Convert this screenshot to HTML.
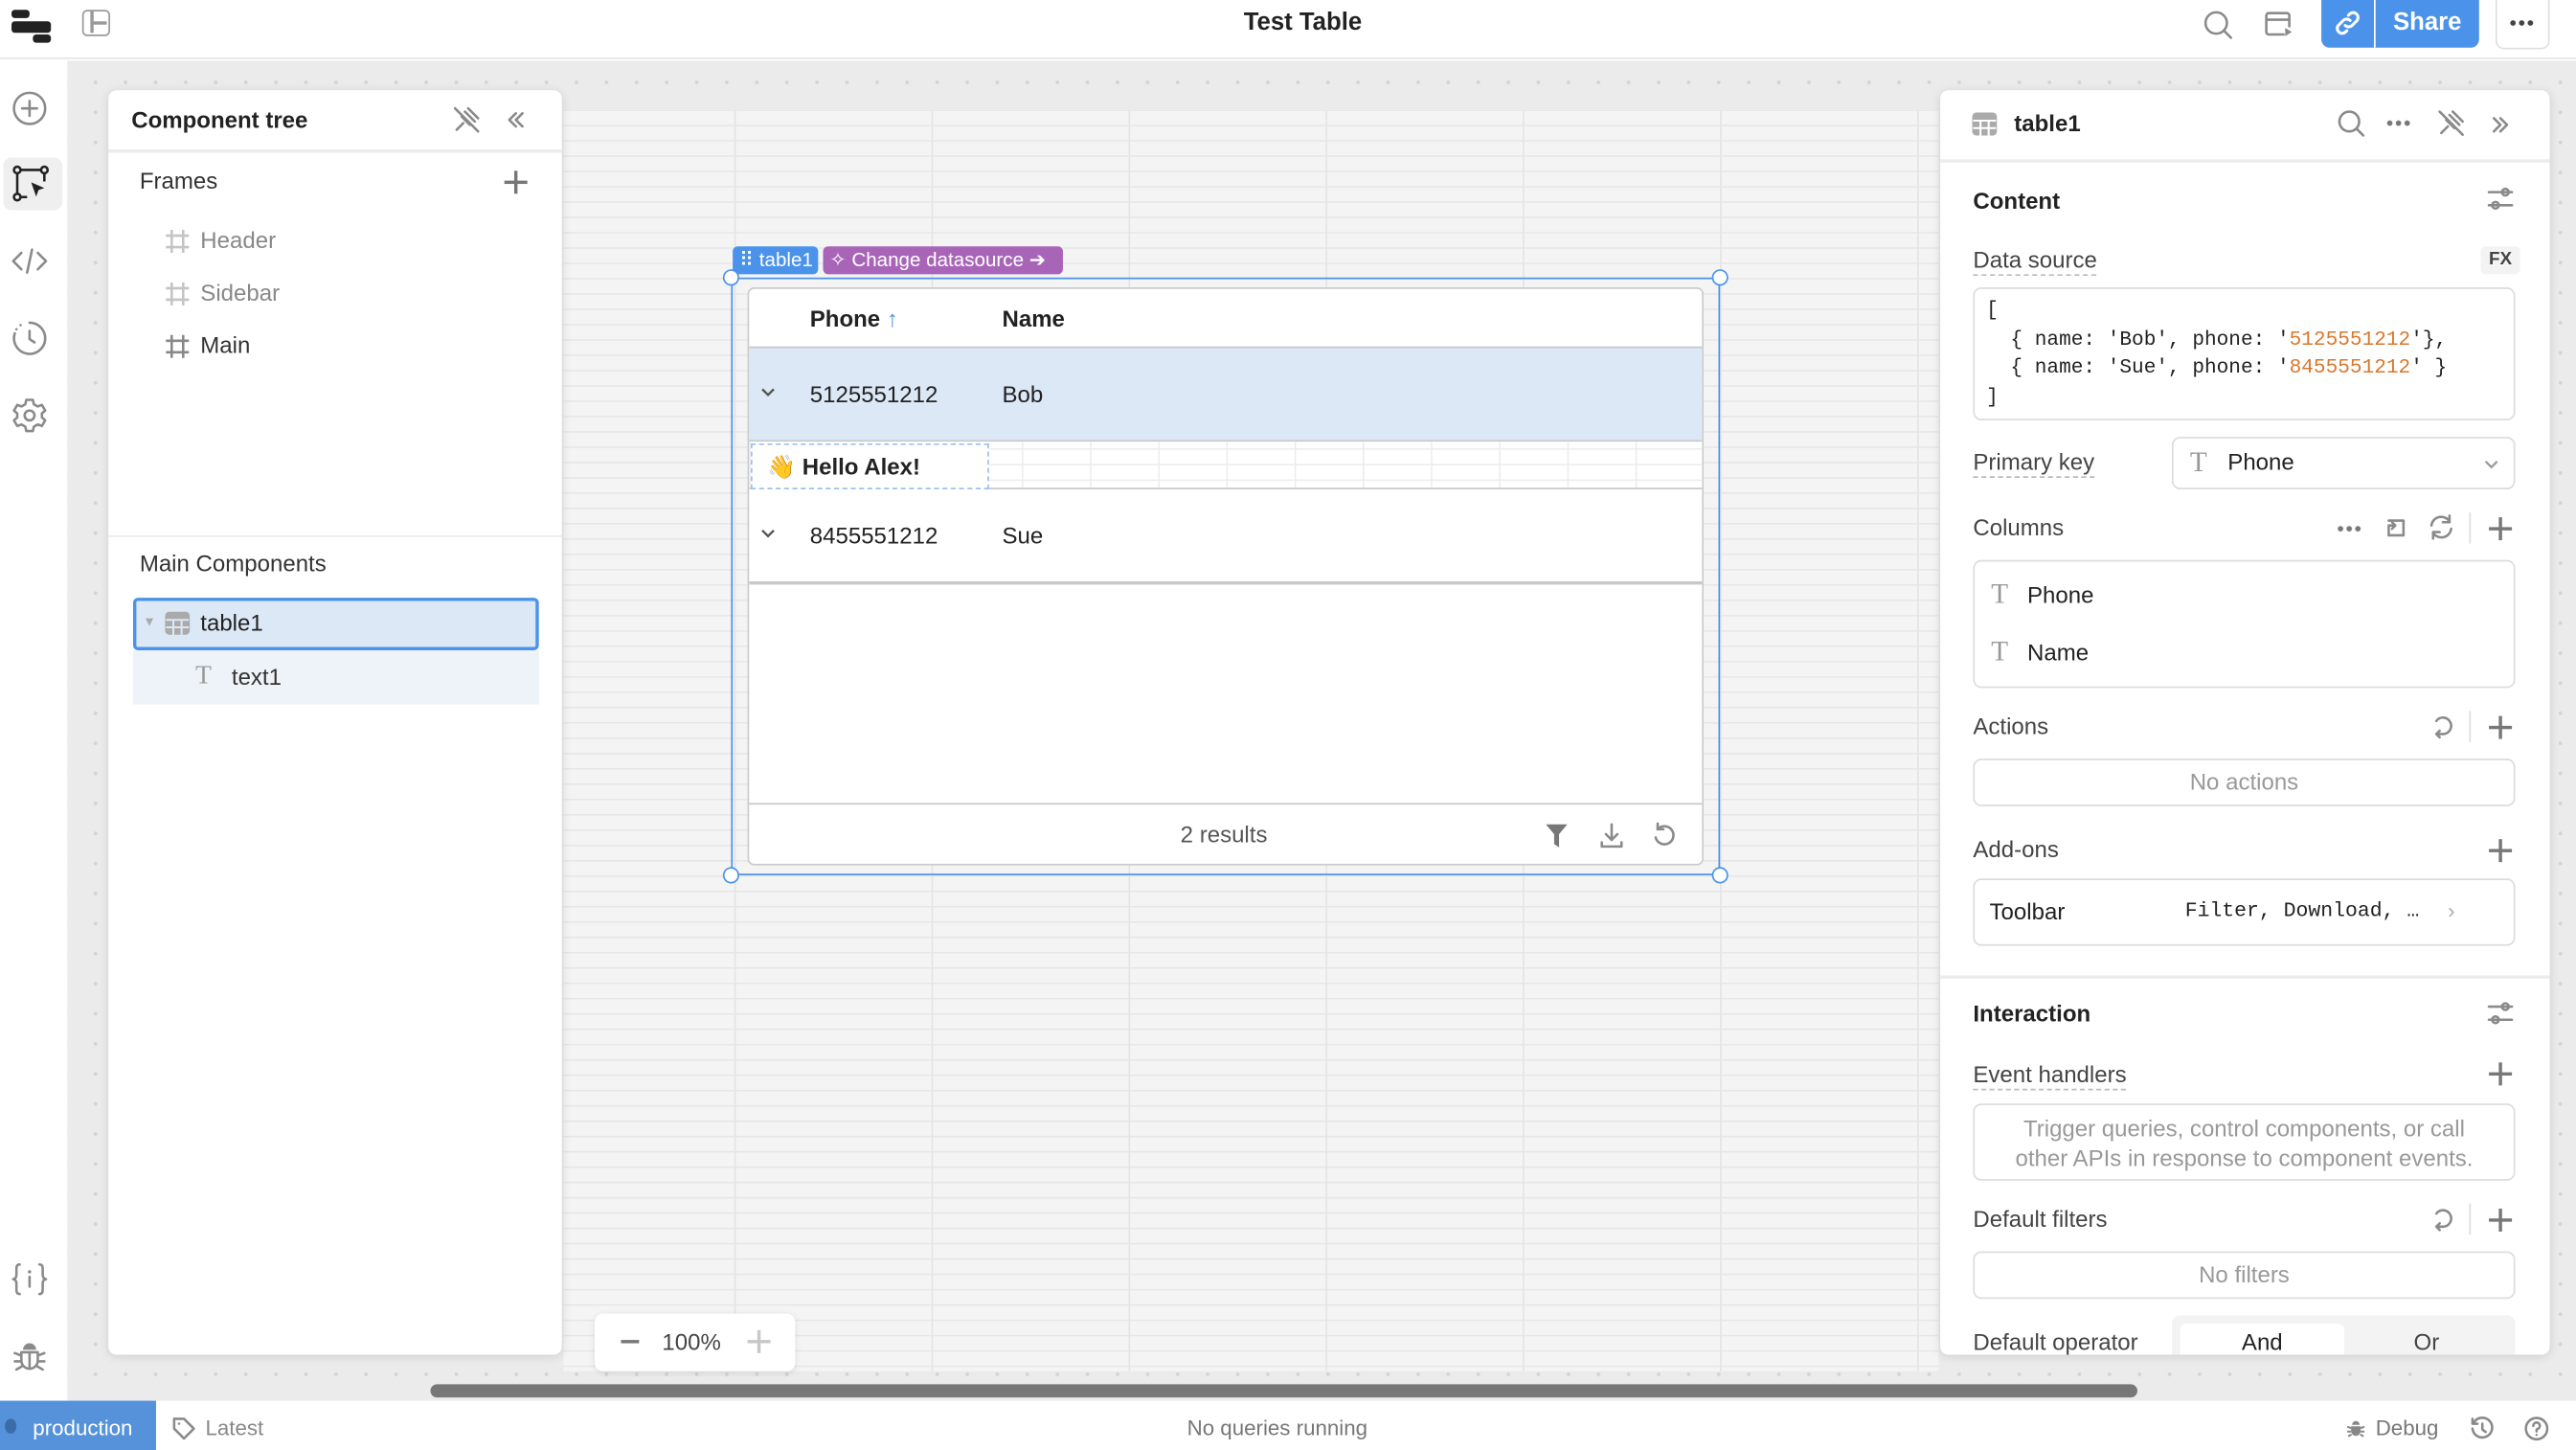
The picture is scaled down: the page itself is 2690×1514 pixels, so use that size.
<!DOCTYPE html>
<html><head><meta charset="utf-8">
<style>
*{box-sizing:border-box;margin:0;padding:0}
html,body{width:2690px;height:1514px;overflow:hidden;background:#fff}
#w{position:absolute;left:0;top:0;width:1568px;height:883px;transform:scale(1.71556,1.7146);transform-origin:0 0;font-family:"Liberation Sans",sans-serif;color:#222;font-size:14px}
.a{position:absolute}
svg{display:block}
.ic{stroke:#8a8a8a;fill:none;stroke-width:1.5;stroke-linecap:round;stroke-linejoin:round}
.lbl{color:#444;font-size:14px}
.dash{border-bottom:1px dashed #bbb;padding-bottom:1px}
.box{border:1px solid #dcdcdc;border-radius:5px;background:#fff}
.plus{position:absolute;width:14px;height:14px}
.plus:before,.plus:after{content:"";position:absolute;background:#777}
.plus:before{left:6px;top:0;width:1.5px;height:14px}
.plus:after{top:6px;left:0;height:1.5px;width:14px}
.dots{position:absolute;width:16px;height:4px;background:radial-gradient(circle,#777 1.5px,transparent 1.8px);background-size:5.3px 4px}
</style></head><body><div id="w">

<!-- top bar -->
<div class="a" style="left:0;top:0;width:1568px;height:36px;background:#fff;border-bottom:1px solid #e6e6e6"></div>
<div class="a" style="left:7px;top:6px;width:11px;height:5px;background:#222;border-radius:2px"></div>
<div class="a" style="left:7px;top:12.5px;width:24px;height:7px;background:#222;border-radius:2px"></div>
<div class="a" style="left:20px;top:21px;width:11px;height:5px;background:#222;border-radius:2px"></div>
<div class="a" style="left:50px;top:6px;width:17px;height:16px;border:1.5px solid #999;border-radius:3px"><div class="a" style="left:4px;top:0;width:1.5px;height:13px;background:#999"></div><div class="a" style="left:5px;top:6px;width:9px;height:1.5px;background:#999"></div></div>
<div class="a" style="left:0;top:5px;width:1586px;text-align:center;font-weight:bold;font-size:15px;color:#222">Test Table</div>
<svg class="a" style="left:1340px;top:5px" width="20" height="20" viewBox="0 0 20 20"><circle cx="9" cy="9" r="6.5" class="ic" stroke-width="1.6"/><path d="M14 14l4 4" class="ic" stroke-width="1.6"/></svg>
<svg class="a" style="left:1377px;top:5px" width="20" height="20" viewBox="0 0 20 20"><path d="M13 16H4a1.5 1.5 0 0 1-1.5-1.5v-10A1.5 1.5 0 0 1 4 3h11a1.5 1.5 0 0 1 1.5 1.5V11M2.5 7h14" class="ic" stroke-width="1.6"/><path d="M14 12l4 2.5-4 2.5z" fill="#8a8a8a"/></svg>
<div class="a" style="left:1413px;top:0;width:96px;height:29px;background:#4b93ea;border-radius:0 0 5px 5px"></div>
<div class="a" style="left:1445px;top:0;width:1px;height:29px;background:#fff"></div>
<svg class="a" style="left:1419px;top:4px" width="20" height="20" viewBox="0 0 20 20"><path d="M8.5 11.5a3 3 0 0 0 4.2 0l3-3a3 3 0 0 0-4.2-4.2l-1 1M11.5 8.5a3 3 0 0 0-4.2 0l-3 3a3 3 0 0 0 4.2 4.2l1-1" stroke="#fff" fill="none" stroke-width="1.8" stroke-linecap="round"/></svg>
<div class="a" style="left:1446px;top:5px;width:63px;text-align:center;color:#fff;font-weight:bold;font-size:15px">Share</div>
<div class="a" style="left:1519px;top:0;width:33px;height:30px;border:1px solid #e0e0e0;border-top:none;border-radius:0 0 5px 5px"></div>
<div class="dots" style="left:1527px;top:12px;background-image:radial-gradient(circle,#444 1.5px,transparent 1.8px)"></div>

<!-- left rail -->
<div class="a" style="left:0;top:37px;width:41px;height:816px;background:#fff"></div>
<svg class="a" style="left:6px;top:54px" width="24" height="24" viewBox="0 0 24 24"><circle cx="12" cy="12" r="9.5" class="ic"/><path d="M12 7.5v9M7.5 12h9" class="ic"/></svg>
<div class="a" style="left:2px;top:96px;width:36px;height:32px;background:#efefef;border-radius:5px"></div>
<svg class="a" style="left:7px;top:100px" width="24" height="24" viewBox="0 0 24 24"><circle cx="3.5" cy="3.5" r="2" stroke="#222" fill="none" stroke-width="1.5"/><circle cx="20" cy="3.5" r="2" stroke="#222" fill="none" stroke-width="1.5"/><circle cx="3.5" cy="20" r="2" stroke="#222" fill="none" stroke-width="1.5"/><path d="M5.5 3.5h12.5M3.5 5.5v12.5M20 5.5v5M5.5 20h4" stroke="#222" stroke-width="1.5"/><path d="M12 11l8 3.5-3.5 1.2-1.5 4z" fill="#222"/></svg>
<svg class="a" style="left:6px;top:147px" width="24" height="24" viewBox="0 0 24 24"><path d="M7 7l-5 5 5 5M17 7l5 5-5 5M13.5 5l-3 14" class="ic"/></svg>
<svg class="a" style="left:6px;top:194px" width="24" height="24" viewBox="0 0 24 24"><path d="M12 2.5A9.5 9.5 0 1 1 3 9" class="ic"/><path d="M4 6.5l.01 0M6.5 4l.01 0M12 7.5v5l3 2" class="ic" stroke-width="1.8"/></svg>
<svg class="a" style="left:6px;top:241px" width="24" height="24" viewBox="0 0 24 24"><circle cx="12" cy="12" r="3" class="ic"/><path d="M10 2.5h4l.6 2.7 2.3 1.3 2.6-.9 2 3.4-2 1.8v2.4l2 1.8-2 3.4-2.6-.9-2.3 1.3-.6 2.7h-4l-.6-2.7-2.3-1.3-2.6.9-2-3.4 2-1.8v-2.4l-2-1.8 2-3.4 2.6.9 2.3-1.3z" class="ic"/></svg>
<svg class="a" style="left:6px;top:767px" width="24" height="24" viewBox="0 0 24 24"><path d="M6 3C4 3 4 4.5 4 6.5v3C4 11 3 12 2 12c1 0 2 1 2 2.5v3C4 19.5 4 21 6 21M18 3c2 0 2 1.5 2 3.5v3c0 1.5 1 2.5 2 2.5-1 0-2 1-2 2.5v3c0 2 0 3.5-2 3.5M12 10.5v6" class="ic"/><circle cx="12" cy="7.5" r="1" fill="#8a8a8a"/></svg>
<svg class="a" style="left:6px;top:814px" width="24" height="24" viewBox="0 0 24 24"><path d="M8 8a4 4 0 0 1 8 0z" fill="#8a8a8a"/><path d="M7 9.5h10v5a5 5 0 0 1-10 0zM12 9.5v10M3 10l4 1.5M21 10l-4 1.5M3 15h4M21 15h-4M4 20l3.5-2M20 20l-3.5-2" class="ic"/></svg>

<!-- canvas -->
<div class="a" style="left:41px;top:37px;width:1527px;height:816px;background:#ebebeb;background-image:radial-gradient(circle,#d4d4d4 1px,transparent 1.3px);background-size:18.3px 18.3px;background-position:8px 4px"></div>
<div class="a" style="left:343px;top:67px;width:837px;height:768px;background-color:#f4f4f4;background-image:linear-gradient(to bottom,#e6e6e6 1px,transparent 1px),linear-gradient(to right,#e3e3e3 1px,transparent 1px);background-size:100% 9.33px,120px 100%;background-position:0 9px,104px 0"></div>

<!-- table selection -->
<div class="a" style="left:446px;top:150px;width:52px;height:17px;background:#4b93ea;border-radius:3px;color:#fff;font-size:12px;line-height:17px;padding-left:4px">⠿ table1</div>
<div class="a" style="left:501px;top:150px;width:146px;height:17px;background:#a865b8;border-radius:3px;color:#fff;font-size:12px;line-height:17px;padding-left:4px">✧ Change datasource ➔</div>
<div class="a" style="left:445px;top:169px;width:602px;height:364px;border:1.5px solid #4b93ea"></div>
<div class="a" style="left:440px;top:164px;width:10px;height:10px;border:1.5px solid #4b93ea;border-radius:50%;background:#fff"></div>
<div class="a" style="left:1042px;top:164px;width:10px;height:10px;border:1.5px solid #4b93ea;border-radius:50%;background:#fff"></div>
<div class="a" style="left:440px;top:528px;width:10px;height:10px;border:1.5px solid #4b93ea;border-radius:50%;background:#fff"></div>
<div class="a" style="left:1042px;top:528px;width:10px;height:10px;border:1.5px solid #4b93ea;border-radius:50%;background:#fff"></div>

<div class="a" style="left:455px;top:175px;width:582px;height:352px;background:#fff;border:1px solid #ccc;border-radius:4px;overflow:hidden">
  <div class="a" style="left:37px;top:10px;font-weight:bold;font-size:14px">Phone <span style="color:#4b93ea">↑</span></div>
  <div class="a" style="left:154px;top:10px;font-weight:bold;font-size:14px">Name</div>
  <div class="a" style="left:0;top:35px;width:582px;height:58px;background:#dce8f5;border-top:1px solid #c8c8c8;border-bottom:1px solid #c8c8c8"></div>
  <svg class="a" style="left:7px;top:60px" width="9" height="6" viewBox="0 0 9 6"><path d="M1 1l3.5 3.5L8 1" stroke="#555" fill="none" stroke-width="1.4"/></svg>
  <div class="a" style="left:37px;top:56px;font-size:14px">5125551212</div>
  <div class="a" style="left:154px;top:56px;font-size:14px">Bob</div>
  <div class="a" style="left:0;top:93px;width:582px;height:29px;background-color:#fff;background-image:linear-gradient(to right,#ececec 1px,transparent 1px),linear-gradient(to bottom,#ececec 1px,transparent 1px);background-size:41.5px 100%,100% 9.5px;background-position:0 0,0 4px;border-bottom:1px solid #c8c8c8"></div>
  <div class="a" style="left:1px;top:94px;width:145px;height:28px;border:1px dashed #9cc2ee;background:#fff;font-weight:bold;font-size:14px;line-height:26px;padding-left:9px">👋 Hello Alex!</div>
  <svg class="a" style="left:7px;top:146px" width="9" height="6" viewBox="0 0 9 6"><path d="M1 1l3.5 3.5L8 1" stroke="#555" fill="none" stroke-width="1.4"/></svg>
  <div class="a" style="left:37px;top:142px;font-size:14px">8455551212</div>
  <div class="a" style="left:154px;top:142px;font-size:14px">Sue</div>
  <div class="a" style="left:0;top:178px;width:582px;height:2px;background:#c8c8c8"></div>
  <div class="a" style="left:0;top:313px;width:582px;height:1px;background:#c8c8c8"></div>
  <div class="a" style="left:-2px;top:324px;width:582px;text-align:center;font-size:14px;color:#555">2 results</div>
  <svg class="a" style="left:483px;top:324px" width="18" height="18" viewBox="0 0 18 18"><path d="M2 2h13l-5 6v8l-3-2V8z" fill="#777"/></svg>
  <svg class="a" style="left:516px;top:324px" width="18" height="18" viewBox="0 0 18 18"><path d="M9 2v9M5.5 8L9 11.5 12.5 8M3 13v2.5h12V13" class="ic" stroke="#777"/></svg>
  <svg class="a" style="left:548px;top:324px" width="18" height="18" viewBox="0 0 18 18"><path d="M5 5a5.5 5.5 0 1 1-1.2 5" class="ic" stroke="#777"/><path d="M5 1.5V5h3.5" class="ic" stroke="#777"/></svg>
</div>

<!-- component tree panel -->
<div class="a" style="left:66px;top:55px;width:276px;height:770px;background:#fff;border-radius:5px;box-shadow:0 1px 6px rgba(0,0,0,.12)"></div>
<div class="a" style="left:66px;top:91px;width:276px;height:1.5px;background:#ececec"></div>
<div class="a" style="left:80px;top:65px;font-weight:bold;font-size:14px">Component tree</div>
<svg class="a" style="left:275px;top:64px" width="18" height="18" viewBox="0 0 18 18"><path d="M3 15l4-4M6 7l5 5M8 4l6 6M10 2l6 6M2 2l14 14" class="ic"/></svg>
<svg class="a" style="left:308px;top:67px" width="12" height="12" viewBox="0 0 12 12"><path d="M6 2L2 6l4 4M10 2L6 6l4 4" class="ic" stroke="#777"/></svg>
<div class="a" style="left:85px;top:102px;font-size:14px;color:#333">Frames</div>
<div class="plus" style="left:307px;top:104px"></div>
<svg class="a" style="left:100px;top:139px" width="16" height="16" viewBox="0 0 16 16"><path d="M4.5 1v14M11.5 1v14M1 4.5h14M1 11.5h14" stroke="#c4c4c4" stroke-width="1.5"/></svg>
<div class="a" style="left:122px;top:138px;font-size:14px;color:#888">Header</div>
<svg class="a" style="left:100px;top:171px" width="16" height="16" viewBox="0 0 16 16"><path d="M4.5 1v14M11.5 1v14M1 4.5h14M1 11.5h14" stroke="#c4c4c4" stroke-width="1.5"/></svg>
<div class="a" style="left:122px;top:170px;font-size:14px;color:#888">Sidebar</div>
<svg class="a" style="left:100px;top:203px" width="16" height="16" viewBox="0 0 16 16"><path d="M4.5 1v14M11.5 1v14M1 4.5h14M1 11.5h14" stroke="#888" stroke-width="1.5"/></svg>
<div class="a" style="left:122px;top:202px;font-size:14px;color:#333">Main</div>
<div class="a" style="left:66px;top:326px;width:276px;height:1px;background:#ececec"></div>
<div class="a" style="left:85px;top:335px;font-size:14px;color:#333">Main Components</div>
<div class="a" style="left:81px;top:396px;width:247px;height:33px;background:#eef3f9"></div>
<div class="a" style="left:81px;top:364px;width:247px;height:32px;background:#dce8f5;border:2px solid #4b93ea;border-radius:3px"></div>
<div class="a" style="left:87px;top:374px;font-size:8px;color:#aaa">▼</div>
<svg class="a" style="left:100px;top:372px" width="16" height="15" viewBox="0 0 16 15"><rect x="0.5" y="0.5" width="15" height="14" rx="2.5" fill="#aaa"/><path d="M1 5.5h14M1 10h14M5.5 5v10M10.5 5v10" stroke="#dce8f5" stroke-width="1.2"/></svg>
<div class="a" style="left:122px;top:371px;font-size:14px;color:#222">table1</div>
<div class="a" style="left:119px;top:403px;font-size:16px;color:#999;font-family:'Liberation Serif',serif">T</div>
<div class="a" style="left:141px;top:404px;font-size:14px;color:#333">text1</div>

<!-- zoom control -->
<div class="a" style="left:362px;top:800px;width:122px;height:35px;background:#fff;border-radius:5px;box-shadow:0 1px 4px rgba(0,0,0,.1)"></div>
<div class="a" style="left:378px;top:816px;width:11px;height:2px;background:#777"></div>
<div class="a" style="left:403px;top:809px;font-size:14px;color:#444">100%</div>
<div class="plus" style="left:455px;top:810px;opacity:.4"></div>
<div class="a" style="left:262px;top:843px;width:1039px;height:8px;background:#777;border-radius:4px"></div>

<!-- right panel -->
<div class="a" style="left:1181px;top:55px;width:371px;height:770px;background:#fff;border-radius:5px;box-shadow:0 1px 6px rgba(0,0,0,.12)"></div>
<div class="a" style="left:1181px;top:97px;width:371px;height:1.5px;background:#ececec"></div>
<svg class="a" style="left:1200px;top:68px" width="16" height="15" viewBox="0 0 16 15"><rect x="0.5" y="0.5" width="15" height="14" rx="2.5" fill="#aaa"/><path d="M1 5.5h14M1 10h14M5.5 5v10M10.5 5v10" stroke="#fff" stroke-width="1.2"/></svg>
<div class="a" style="left:1226px;top:67px;font-weight:bold;font-size:14px">table1</div>
<svg class="a" style="left:1422px;top:66px" width="18" height="18" viewBox="0 0 18 18"><circle cx="8" cy="8" r="6" class="ic"/><path d="M12.5 12.5l4 4" class="ic"/></svg>
<div class="dots" style="left:1452px;top:73px"></div>
<svg class="a" style="left:1483px;top:66px" width="18" height="18" viewBox="0 0 18 18"><path d="M3 15l4-4M6 7l5 5M8 4l6 6M10 2l6 6M2 2l14 14" class="ic"/></svg>
<svg class="a" style="left:1516px;top:70px" width="12" height="12" viewBox="0 0 12 12"><path d="M2 2l4 4-4 4M6 2l4 4-4 4" class="ic" stroke="#777"/></svg>

<div class="a" style="left:1201px;top:114px;font-weight:bold;font-size:14px">Content</div>
<svg class="a" style="left:1513px;top:112px" width="18" height="18" viewBox="0 0 18 18"><path d="M2 5h14M2 13h14" class="ic"/><circle cx="12" cy="5" r="2" fill="#fff" class="ic"/><circle cx="6" cy="13" r="2" fill="#fff" class="ic"/></svg>
<div class="a lbl" style="left:1201px;top:150px"><span class="dash">Data source</span></div>
<div class="a" style="left:1510px;top:150px;width:24px;height:17px;background:#f3f3f3;border-radius:3px;font-size:11px;font-weight:bold;color:#444;text-align:center;line-height:17px">FX</div>
<div class="a box" style="left:1201px;top:175px;width:330px;height:81px;font-family:'Liberation Mono',monospace;font-size:12.3px;line-height:17.6px;padding:5px 0 0 7px;white-space:pre;color:#222">[
  { name: 'Bob', phone: '<span style="color:#d9772c">5125551212</span>'},
  { name: 'Sue', phone: '<span style="color:#d9772c">8455551212</span>' }
]</div>
<div class="a lbl" style="left:1201px;top:273px"><span class="dash">Primary key</span></div>
<div class="a box" style="left:1322px;top:266px;width:209px;height:32px"></div>
<div class="a" style="left:1333px;top:272px;font-size:17px;color:#999;font-family:'Liberation Serif',serif">T</div>
<div class="a" style="left:1356px;top:273px;font-size:14px;color:#222">Phone</div>
<svg class="a" style="left:1512px;top:280px" width="9" height="6" viewBox="0 0 9 6"><path d="M1 1l3.5 3.5L8 1" stroke="#999" fill="none" stroke-width="1.3"/></svg>

<div class="a lbl" style="left:1201px;top:313px">Columns</div>
<div class="dots" style="left:1422px;top:320px"></div>
<svg class="a" style="left:1451px;top:314px" width="15" height="15" viewBox="0 0 15 15"><path d="M3 3h9v9H3V6M3 6h4M5 4l2 2-2 2" class="ic" stroke-width="1.3"/></svg>
<svg class="a" style="left:1477px;top:312px" width="18" height="18" viewBox="0 0 18 18"><path d="M3 8a6 6 0 0 1 11-2.5M15 10a6 6 0 0 1-11 2.5M14 2v4h-4M4 16v-4h4" class="ic"/></svg>
<div class="a" style="left:1503px;top:312px;width:1px;height:19px;background:#ddd"></div>
<div class="plus" style="left:1515px;top:315px"></div>
<div class="a box" style="left:1201px;top:341px;width:330px;height:78px"></div>
<div class="a" style="left:1212px;top:352px;font-size:17px;color:#999;font-family:'Liberation Serif',serif">T</div>
<div class="a" style="left:1234px;top:354px;font-size:14px;color:#222">Phone</div>
<div class="a" style="left:1212px;top:387px;font-size:17px;color:#999;font-family:'Liberation Serif',serif">T</div>
<div class="a" style="left:1234px;top:389px;font-size:14px;color:#222">Name</div>

<div class="a lbl" style="left:1201px;top:434px">Actions</div>
<svg class="a" style="left:1478px;top:434px" width="18" height="18" viewBox="0 0 18 18"><path d="M5 5a5 5 0 1 1 4 8H5M7 11l-2 2 2 2" class="ic" stroke="#bbb"/></svg>
<div class="a" style="left:1503px;top:433px;width:1px;height:19px;background:#ddd"></div>
<div class="plus" style="left:1515px;top:436px"></div>
<div class="a box" style="left:1201px;top:462px;width:330px;height:29px;text-align:center;line-height:27px;color:#999;font-size:14px">No actions</div>

<div class="a lbl" style="left:1201px;top:509px">Add-ons</div>
<div class="plus" style="left:1515px;top:511px"></div>
<div class="a box" style="left:1201px;top:535px;width:330px;height:41px"></div>
<div class="a" style="left:1211px;top:547px;font-size:14px;color:#222">Toolbar</div>
<div class="a" style="left:1330px;top:548px;font-size:12.5px;font-family:'Liberation Mono',monospace;color:#222">Filter, Download, …</div>
<div class="a" style="left:1490px;top:547px;font-size:13px;color:#aaa">›</div>

<div class="a" style="left:1181px;top:594px;width:371px;height:1.5px;background:#ececec"></div>
<div class="a" style="left:1201px;top:609px;font-weight:bold;font-size:14px">Interaction</div>
<svg class="a" style="left:1513px;top:608px" width="18" height="18" viewBox="0 0 18 18"><path d="M2 5h14M2 13h14" class="ic"/><circle cx="12" cy="5" r="2" fill="#fff" class="ic"/><circle cx="6" cy="13" r="2" fill="#fff" class="ic"/></svg>
<div class="a lbl" style="left:1201px;top:646px"><span class="dash">Event handlers</span></div>
<div class="plus" style="left:1515px;top:647px"></div>
<div class="a box" style="left:1201px;top:672px;width:330px;height:47px;text-align:center;color:#999;font-size:14px;line-height:18px;padding-top:5px">Trigger queries, control components, or call<br>other APIs in response to component events.</div>
<div class="a lbl" style="left:1201px;top:734px">Default filters</div>
<svg class="a" style="left:1478px;top:734px" width="18" height="18" viewBox="0 0 18 18"><path d="M5 5a5 5 0 1 1 4 8H5M7 11l-2 2 2 2" class="ic" stroke="#777"/></svg>
<div class="a" style="left:1503px;top:733px;width:1px;height:19px;background:#ddd"></div>
<div class="plus" style="left:1515px;top:736px"></div>
<div class="a box" style="left:1201px;top:762px;width:330px;height:29px;text-align:center;line-height:27px;color:#999;font-size:14px">No filters</div>
<div class="a lbl" style="left:1201px;top:809px">Default operator</div>
<div class="a" style="left:1322px;top:801px;width:209px;height:24px;background:#f3f3f3;border-radius:5px 5px 0 0"></div>
<div class="a" style="left:1327px;top:806px;width:100px;height:19px;background:#fff;border-radius:4px 4px 0 0;text-align:center;font-size:14px;color:#222;padding-top:3px">And</div>
<div class="a" style="left:1427px;top:809px;width:100px;text-align:center;font-size:14px;color:#444">Or</div>

<!-- status bar -->
<div class="a" style="left:0;top:853px;width:1568px;height:30px;background:#fff"></div>
<div class="a" style="left:0;top:853px;width:95px;height:30px;background:#5592da"></div>
<div class="a" style="left:3px;top:864px;width:7px;height:9px;border-radius:50%;background:#3a6ca8"></div>
<div class="a" style="left:20px;top:862px;color:#fff;font-size:13px">production</div>
<svg class="a" style="left:104px;top:862px" width="16" height="16" viewBox="0 0 16 16"><path d="M2 2h6l6 6-6 6-6-6z" class="ic" stroke="#999" stroke-width="1.3"/><circle cx="5" cy="5" r=".8" fill="#999"/></svg>
<div class="a" style="left:125px;top:862px;color:#888;font-size:13px">Latest</div>
<div class="a" style="left:0;top:862px;width:1555px;text-align:center;color:#777;font-size:13px">No queries running</div>
<svg class="a" style="left:1427px;top:863px" width="14" height="14" viewBox="0 0 24 24"><path d="M8 8a4 4 0 0 1 8 0z" fill="#888"/><path d="M7 9.5h10v5a5 5 0 0 1-10 0z" fill="#888"/><path d="M3 10l4 1.5M21 10l-4 1.5M3 15h4M21 15h-4M4 20l3.5-2M20 20l-3.5-2" stroke="#888" stroke-width="2"/></svg>
<div class="a" style="left:1446px;top:862px;color:#777;font-size:13px">Debug</div>
<svg class="a" style="left:1503px;top:862px" width="16" height="16" viewBox="0 0 16 16"><path d="M3 4a6 6 0 1 1-1 4M2 2v3h3M8 5v3.5l2 1.5" class="ic" stroke="#888" stroke-width="1.3"/></svg>
<svg class="a" style="left:1536px;top:862px" width="16" height="16" viewBox="0 0 16 16"><circle cx="8" cy="8" r="6.5" class="ic" stroke="#888" stroke-width="1.3"/><path d="M6 6.3a2 2 0 1 1 2.5 1.9c-.4.2-.5.5-.5.9v.5" class="ic" stroke="#888" stroke-width="1.3"/><circle cx="8" cy="11.8" r=".7" fill="#888"/></svg>
</div></body></html>
